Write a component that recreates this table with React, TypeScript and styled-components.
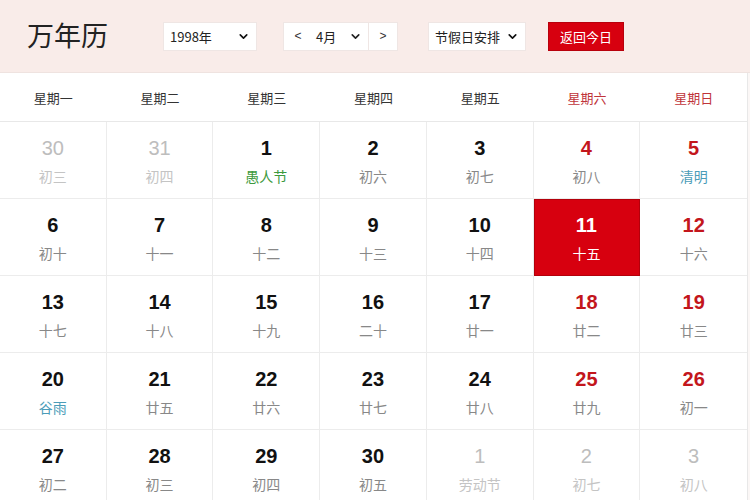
import React from "react";
import styled, { createGlobalStyle } from "styled-components";
import { ChevronDown } from "lucide-react";

const Global = createGlobalStyle`
  html, body { margin: 0; padding: 0; background: #fbf7f6; }
  body { font-family: "Liberation Sans", "Noto Sans CJK SC", sans-serif; }
  * { box-sizing: border-box; }
`;

const Page = styled.div`
  width: 750px;
  height: 500px;
  overflow: hidden;
`;

const Header = styled.div`
  height: 73px;
  background: #f9ece9;
  display: flex;
  align-items: center;
  padding-left: 27px;
  border-bottom: 1px solid #efe3e0;
`;

const Title = styled.div`
  width: 136px;
  font-size: 27px;
  color: #222;
  font-family: "Noto Sans CJK SC", sans-serif;
  margin-top: -3px;
`;

const SelectBox = styled.div<{ $w: number; $mr: number }>`
  width: ${(p) => p.$w}px;
  height: 29px;
  margin-right: ${(p) => p.$mr}px;
  background: #fff;
  border: 1px solid #efe6e4;
  display: flex;
  align-items: center;
  justify-content: space-between;
  padding: 0 6px 0 6px;
  font-size: 13px;
  color: #222;
  font-family: "Noto Sans CJK SC", sans-serif;
  svg { color: #111; }
`;

const Group = styled.div`
  width: 115px;
  height: 29px;
  margin-right: 30px;
  display: flex;
  background: #fff;
  border: 1px solid #efe6e4;
`;

const Arrow = styled.div`
  width: 28px;
  display: flex;
  align-items: center;
  justify-content: center;
  font-size: 12px;
  color: #333;
`;

const MonthSel = styled.div`
  flex: 1;
  display: flex;
  align-items: center;
  justify-content: space-between;
  padding: 0 6px 0 4px;
  font-size: 13px;
  color: #222;
  border-right: 1px solid #efe6e4;
  font-family: "Noto Sans CJK SC", sans-serif;
`;

const TodayBtn = styled.div`
  width: 76px;
  height: 29px;
  background: #d7000f;
  border: 1px solid #b8000c;
  color: #fff;
  font-size: 13px;
  display: flex;
  align-items: center;
  justify-content: center;
  font-family: "Noto Sans CJK SC", sans-serif;
`;

const Table = styled.div`
  width: 748px;
  background: #fff;
  border-right: 1px solid #e8e8e8;
`;

const WeekRow = styled.div`
  display: grid;
  grid-template-columns: repeat(7, 1fr);
  height: 49px;
  border-bottom: 1px solid #e8e8e8;
`;

const WeekHead = styled.div<{ $red: boolean }>`
  display: flex;
  align-items: center;
  justify-content: center;
  font-size: 13px;
  color: ${(p) => (p.$red ? "#c0343a" : "#333")};
  font-family: "Noto Sans CJK SC", sans-serif;
`;

const Grid = styled.div`
  display: grid;
  grid-template-columns: repeat(7, 1fr);
  grid-auto-rows: 77px;
`;

type Kind = "normal" | "dim" | "weekend" | "today";
type Note = "plain" | "green" | "blue";

const Cell = styled.div<{ $today: boolean }>`
  display: flex;
  flex-direction: column;
  align-items: center;
  border-right: 1px solid #ececec;
  border-bottom: 1px solid #ececec;
  background: ${(p) => (p.$today ? "#d7000f" : "#fff")};
  outline: ${(p) => (p.$today ? "1px solid #b3000b" : "none")};
  outline-offset: -1px;
  &:nth-child(7n) { border-right: none; }
`;

const DayNum = styled.div<{ $kind: Kind }>`
  margin-top: 14px;
  font-size: 20px;
  line-height: 24px;
  font-weight: ${(p) => (p.$kind === "dim" ? 400 : 700)};
  color: ${(p) =>
    p.$kind === "dim" ? "#bdbdbd" : p.$kind === "weekend" ? "#c3161c" : p.$kind === "today" ? "#fff" : "#111"};
`;

const Lunar = styled.div<{ $kind: Kind; $note: Note }>`
  margin-top: 6px;
  font-size: 14px;
  line-height: 20px;
  font-family: "Noto Sans CJK SC", sans-serif;
  color: ${(p) =>
    p.$kind === "today"
      ? "#fff"
      : p.$kind === "dim"
      ? "#c4c4c4"
      : p.$note === "green"
      ? "#3d9a3d"
      : p.$note === "blue"
      ? "#4b9cb8"
      : "#888"};
`;

const weeks = ["星期一", "星期二", "星期三", "星期四", "星期五", "星期六", "星期日"];

type Day = { n: number; l: string; k: Kind; note?: Note };

const days: Day[] = [
  { n: 30, l: "初三", k: "dim" },
  { n: 31, l: "初四", k: "dim" },
  { n: 1, l: "愚人节", k: "normal", note: "green" },
  { n: 2, l: "初六", k: "normal" },
  { n: 3, l: "初七", k: "normal" },
  { n: 4, l: "初八", k: "weekend" },
  { n: 5, l: "清明", k: "weekend", note: "blue" },
  { n: 6, l: "初十", k: "normal" },
  { n: 7, l: "十一", k: "normal" },
  { n: 8, l: "十二", k: "normal" },
  { n: 9, l: "十三", k: "normal" },
  { n: 10, l: "十四", k: "normal" },
  { n: 11, l: "十五", k: "today" },
  { n: 12, l: "十六", k: "weekend" },
  { n: 13, l: "十七", k: "normal" },
  { n: 14, l: "十八", k: "normal" },
  { n: 15, l: "十九", k: "normal" },
  { n: 16, l: "二十", k: "normal" },
  { n: 17, l: "廿一", k: "normal" },
  { n: 18, l: "廿二", k: "weekend" },
  { n: 19, l: "廿三", k: "weekend" },
  { n: 20, l: "谷雨", k: "normal", note: "blue" },
  { n: 21, l: "廿五", k: "normal" },
  { n: 22, l: "廿六", k: "normal" },
  { n: 23, l: "廿七", k: "normal" },
  { n: 24, l: "廿八", k: "normal" },
  { n: 25, l: "廿九", k: "weekend" },
  { n: 26, l: "初一", k: "weekend" },
  { n: 27, l: "初二", k: "normal" },
  { n: 28, l: "初三", k: "normal" },
  { n: 29, l: "初四", k: "normal" },
  { n: 30, l: "初五", k: "normal" },
  { n: 1, l: "劳动节", k: "dim" },
  { n: 2, l: "初七", k: "dim" },
  { n: 3, l: "初八", k: "dim" },
];

export default function App() {
  return (
    <Page>
      <Global />
      <Header>
        <Title>万年历</Title>
        <SelectBox $w={94} $mr={26}>
          <span>1998年</span>
          <ChevronDown size={13} strokeWidth={3} />
        </SelectBox>
        <Group>
          <Arrow>&lt;</Arrow>
          <MonthSel>
            <span>4月</span>
            <ChevronDown size={13} strokeWidth={3} />
          </MonthSel>
          <Arrow>&gt;</Arrow>
        </Group>
        <SelectBox $w={98} $mr={22}>
          <span>节假日安排</span>
          <ChevronDown size={13} strokeWidth={3} />
        </SelectBox>
        <TodayBtn>返回今日</TodayBtn>
      </Header>
      <Table>
        <WeekRow>
          {weeks.map((w, i) => (
            <WeekHead key={w} $red={i >= 5}>
              {w}
            </WeekHead>
          ))}
        </WeekRow>
        <Grid>
          {days.map((d, i) => (
            <Cell key={i} $today={d.k === "today"}>
              <DayNum $kind={d.k}>{d.n}</DayNum>
              <Lunar $kind={d.k} $note={d.note ?? "plain"}>
                {d.l}
              </Lunar>
            </Cell>
          ))}
        </Grid>
      </Table>
    </Page>
  );
}
